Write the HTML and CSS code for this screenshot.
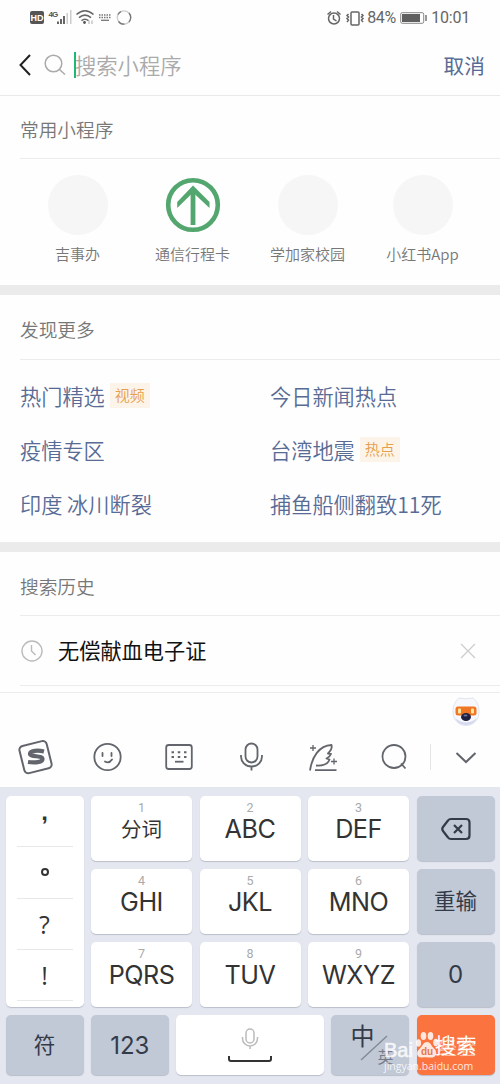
FILE: index.html
```html
<!DOCTYPE html>
<html lang="zh-CN">
<head>
<meta charset="utf-8">
<title>搜索小程序</title>
<link rel="stylesheet" href="styles.css">
</head>
<body>
<div class="phone">
  <div class="status">
    <svg class="status-left" width="106" height="22" viewBox="0 0 106 22">
      <rect x="0" y="4" width="14" height="13" rx="2" fill="#555"/>
      <text x="7" y="14" class="hd" text-anchor="middle">HD</text>
      <text x="18.500" y="9.500" class="net">4G</text>
      <g fill="#666"><rect x="27" y="14.500" width="2" height="2.500"/><rect x="30" y="12" width="2" height="5"/><rect x="33" y="9" width="2" height="8"/></g>
      <g fill="#ccc"><rect x="36.500" y="6" width="1.500" height="11"/><rect x="40" y="3" width="1.500" height="14"/></g>
      <g fill="none" stroke="#666" stroke-width="1.600"><path d="M46.500 7.500q8.500-7.500 17 0M49 10.700q6-5 12 0M51.500 13.600q3.500-2.800 7 0"/></g>
      <circle cx="54.500" cy="15.500" r="1.400" fill="#555"/><path d="M59 13.500v3.500M62 13.500v3.500" stroke="#aaa"/>
      <g stroke="#777" stroke-width="1.300"><path d="M69 8h12M69 10.500h12" stroke-dasharray="1.500 1"/><path d="M71 13.300h8"/></g>
      <g fill="none" stroke-width="1.300"><circle cx="94" cy="10.500" r="6.700" stroke="#ccc"/><path d="M99 6a6.700 6.700 0 0 1 0 9M88.500 14.300a6.700 6.700 0 0 0 6 2.900M88 7.500a6.700 6.700 0 0 1 3-3" stroke="#777"/></g>
    </svg>
    <div class="status-right">
      <svg width="40" height="20" viewBox="0 0 40 20" fill="none" stroke="#666" stroke-width="1.500">
        <circle cx="8" cy="10.500" r="5.500"/><path d="M7.500 7v4l3 2M1.500 6.500l3.500-3M14.500 6.500L11 3.500"/>
        <rect x="25" y="4" width="8" height="13" rx="1"/><path d="M22.500 6l-1.500 1.500 1.500 1.500-1.500 1.500 1.500 1.500-1.500 2M35.500 6l1.500 1.500-1.500 1.500 1.500 1.500-1.500 1.500 1.500 2"/>
      </svg>
      <span class="percent">84%</span>
      <svg width="28" height="14" viewBox="0 0 28 14"><rect x=".7" y="1.700" width="23" height="10.600" rx="1.500" fill="none" stroke="#888"/><rect x="2" y="3" width="18" height="8" fill="#606060"/><path d="M26 4v6" stroke="#777" stroke-width="1.500"/></svg>
      <span class="time">10:01</span>
    </div>
  </div>

  <header class="search-head">
    <svg class="back" width="12" height="22" viewBox="0 0 12 22"><path d="M11 1L1.500 11 11 21" fill="none" stroke="#222" stroke-width="2"/></svg>
    <svg class="lens" width="22" height="22" viewBox="0 0 22 22" fill="none" stroke="#aaa" stroke-width="1.500"><circle cx="9.500" cy="9.500" r="8.300"/><path d="M15.500 15.500l5.500 5"/></svg>
    <span class="caret"></span>
    <span class="placeholder">搜索小程序</span>
    <span class="cancel">取消</span>
  </header>

  <section class="recent">
    <h2 class="title">常用小程序</h2>
    <div class="apps">
      <div class="app"><span class="disc"></span><span>吉事办</span></div>
      <div class="app"><svg width="60" height="60" viewBox="0 0 60 60" fill="none" stroke="#53a66e"><circle cx="30" cy="30" r="24.800" stroke-width="4.600"/><path d="M30 50V15" stroke-width="4.800"/><path d="M14.200 33V27L30 10.500 46.500 27V33L30 17.500z" fill="#53a66e" stroke="none"/></svg><span>通信行程卡</span></div>
      <div class="app"><span class="disc"></span><span>学加家校园</span></div>
      <div class="app"><span class="disc"></span><span>小红书App</span></div>
    </div>
  </section>

  <section class="discover">
    <h2 class="title">发现更多</h2>
    <div class="links">
      <div class="link">热门精选<span class="tag">视频</span></div><div class="link">今日新闻热点</div>
      <div class="link">疫情专区</div><div class="link">台湾地震<span class="tag">热点</span></div>
      <div class="link">印度 冰川断裂</div><div class="link">捕鱼船侧翻致11死</div>
    </div>
  </section>

  <section class="history">
    <h2 class="title">搜索历史</h2>
    <div class="entry">
      <svg width="22" height="22" viewBox="0 0 22 22" fill="none" stroke="#bbb" stroke-width="1.400"><circle cx="11" cy="11" r="10"/><path d="M10.500 5v6l4 4"/></svg>
      <span class="entry-text">无偿献血电子证</span>
      <svg width="16" height="16" viewBox="0 0 16 16"><path d="M1 1l14 14M15 1L1 15" stroke="#ccc" stroke-width="1.200"/></svg>
    </div>
  </section>

  <div class="keyboard">
    <div class="mascot-row">
      <svg width="30" height="32" viewBox="0 0 30 32">
        <path d="M8 3q7 1.500 14 0C26 6 28 11 28 17c0 8-6 13.500-13 13.500S2 25 2 17C2 11 4 6 8 3z" fill="#f7f8fc" stroke="#e1e4f0"/>
        <path d="M4 23q11 9 22 0-3 7-11 7T4 23z" fill="#d3d8ee"/>
        <rect x="4.500" y="11.500" width="21" height="9" rx="2.500" fill="#ef7622"/><rect x="7" y="13.500" width="3" height="5" rx="1" fill="#ffe6a0"/><rect x="20" y="13.500" width="3" height="5" rx="1" fill="#ffe6a0"/>
        <ellipse cx="15" cy="22" rx="5" ry="4" fill="#1e2140"/><ellipse cx="14.500" cy="20.500" rx="2" ry="1" fill="#6d789e"/>
      </svg>
    </div>
    <div class="tools">
      <svg width="36" height="36" viewBox="0 0 36 36" fill="none" stroke="#62656b"><rect x="3.500" y="4" width="28" height="28" rx="4" stroke-width="2" transform="rotate(-14 18 18)"/><path d="M26 12.500C20 11 12.500 11.500 12 14.500c-.5 4 12.500 1.500 12.500 5.500 0 3.500-8 4-14.500 3" stroke-width="4.200"/></svg>
      <svg width="36" height="36" viewBox="0 0 36 36" fill="none" stroke="#62656b" stroke-width="1.800"><circle cx="17.500" cy="18" r="13.200"/><path d="M12.500 14v3M21.500 14v3M15 22.500q4 2.500 7-2" stroke-linecap="round"/></svg>
      <svg width="36" height="36" viewBox="0 0 36 36" fill="none" stroke="#62656b" stroke-width="1.800"><rect x="5.200" y="6" width="25.600" height="24" rx="2.500"/><path d="M10.500 13.200h15M10.500 18h15" stroke-dasharray="2.500 3.750" stroke-width="2"/><path d="M14 22.700h8.500"/></svg>
      <svg width="36" height="36" viewBox="0 0 36 36" fill="none" stroke="#62656b" stroke-width="1.800"><rect x="12.500" y="4.500" width="12" height="19" rx="6"/><path d="M8 16v1.500a10.500 10 0 0 0 21 0V16M18.500 27.500v4"/></svg>
      <svg width="36" height="36" viewBox="0 0 36 36" fill="none" stroke="#62656b" stroke-width="1.800" stroke-linejoin="round"><path d="M5 31.500C7 18 14 6.500 26.500 6c1 3-1 6-3.500 8.500l3 .5c-1 2.500-2.500 3.500-4.500 4.500l3 1c-1.500 4.500-5 6.500-13.500 6M10 31.200H31.500"/><path d="M8 6v6M5 9h6M29 19.500v6M26 22.500h6" stroke-width="1.300"/></svg>
      <svg width="36" height="36" viewBox="0 0 36 36" fill="none" stroke="#62656b" stroke-width="1.800"><circle cx="18" cy="17.500" r="11.500"/><path d="M25 24.500l4.500 5"/></svg>
      <span class="tool-rule"></span>
      <svg width="36" height="36" viewBox="0 0 36 36" fill="none" stroke="#62656b" stroke-width="2"><path d="M8.500 14L18 23l9.500-9"/></svg>
    </div>
    <div class="pad">
      <div class="main-keys">
        <div class="key punct"><span>,</span><span class="stop"><i></i></span><span>?</span><span>!</span></div>
        <div class="key"><small>1</small><b class="cn">分词</b></div>
        <div class="key"><small>2</small><b>ABC</b></div>
        <div class="key"><small>3</small><b>DEF</b></div>
        <div class="key gray"><svg width="32" height="24" viewBox="0 0 32 24" fill="none" stroke="#333b49" stroke-width="2.200" stroke-linejoin="round"><path d="M11 2h15q3.500 0 3.500 3.500v13Q29.500 22 26 22H11q-2 0-3-1.500L3 14q-1.500-2 0-4l5-6.500Q9 2 11 2z"/><path d="M14 8l8 8M22 8l-8 8"/></svg></div>
        <div class="key"><small>4</small><b>GHI</b></div>
        <div class="key"><small>5</small><b>JKL</b></div>
        <div class="key"><small>6</small><b>MNO</b></div>
        <div class="key gray reset">重输</div>
        <div class="key"><small>7</small><b>PQRS</b></div>
        <div class="key"><small>8</small><b>TUV</b></div>
        <div class="key"><small>9</small><b>WXYZ</b></div>
        <div class="key gray zero">0</div>
      </div>
      <div class="bottom-keys">
        <div class="key gray sym">符</div>
        <div class="key gray digits">123</div>
        <div class="key space"><svg width="48" height="38" viewBox="0 0 48 38" fill="none"><g stroke="#bbb" stroke-width="1.500"><rect x="20" y="2" width="8" height="14" rx="4"/><path d="M16.500 10v1.500a7.500 7.500 0 0 0 15 0V10M24 19v3"/></g><path d="M3 29v3q0 2 2 2h38q2 0 2-2v-3" stroke="#333" stroke-width="2"/></svg></div>
        <div class="key gray lang"><span class="zh">中</span><svg class="slash" width="28" height="26" viewBox="0 0 28 26"><path d="M1 25L27 1" stroke="#7f8795" stroke-width="1.300"/></svg><span class="en">英</span></div>
        <div class="key go">搜索</div>
      </div>
    </div>
  </div>

  <div class="watermark">
    <div class="brand"><span>Bai</span><svg width="24" height="28" viewBox="0 0 24 28"><g fill="#fff"><ellipse cx="3.500" cy="12" rx="2.600" ry="3.700"/><ellipse cx="8.500" cy="5" rx="2.800" ry="4"/><ellipse cx="15.500" cy="5" rx="2.800" ry="4"/><ellipse cx="20.800" cy="11.500" rx="2.600" ry="3.700"/><path d="M12 11c4 0 4 4 7.500 7 3 3 2 8.500-2.500 8.500-3 0-7-.8-10 0C2 27 .5 21.500 4 18.500 7.500 15.500 8 11 12 11z"/></g><text x="12" y="24" class="du" text-anchor="middle">du</text></svg><span class="jy">经验</span></div>
    <div class="site">jingyan.baidu.com</div>
  </div>
</div>
</body>
</html>
```
FILE: styles.css
```css
* { box-sizing: border-box; }
body { margin: 0; background: #fefefe; font-family: Roboto, "Noto Sans CJK SC", sans-serif; }
svg { display: block; flex: none; }
.phone { position: relative; width: 500px; height: 1084px; overflow: hidden; display: flex; flex-direction: column; }

.status { height: 35px; display: flex; justify-content: space-between; padding: 7px 30px 0 30px; }
.hd { font: bold 9px "Liberation Sans", sans-serif; fill: #fff; }
.net { font: bold 8px "Liberation Sans", sans-serif; fill: #555; letter-spacing: -1px; }
.status-right { display: flex; align-items: center; height: 21px; color: #666; font-size: 16px; }
.status-right svg + .percent + svg { margin-left: 2px; }
.percent { width: 31px; margin-left: 1px; letter-spacing: -.3px; }
.time { margin-left: 3px; letter-spacing: -.2px; }

.search-head { height: 61px; display: flex; align-items: center; padding: 0 15px 0 19px; border-bottom: 1px solid #e9e9e9; }
.lens { margin-left: 13px; }
.caret { width: 2px; height: 26px; margin-left: 8px; background: #1fb877; }
.placeholder { margin-left: -1px; padding-bottom: 2px; font-size: 21.300px; font-weight: 350; color: #aaa; }
.cancel { margin-left: auto; font-size: 20.700px; color: #576b95; }

.title { margin: 0 0 0 20px; font-size: 18.700px; line-height: 27px; font-weight: 350; color: #777; border-bottom: 1px solid #ececec; }
.recent { height: 189px; }
.recent .title { height: 63px; padding-top: 22px; }
.apps { display: grid; grid-template-columns: repeat(4, 115px); padding: 16px 0 0 20px; }
.app { display: flex; flex-direction: column; align-items: center; font: 350 15px/22px "Noto Sans CJK SC", sans-serif; color: #777; gap: 8px; }
.disc { width: 60px; height: 60px; border-radius: 50%; background: #f6f6f6; }

.discover { height: 257px; border-top: 10px solid #ebebeb; }
.discover .title { height: 65px; padding-top: 23px; }
.links { display: grid; grid-template-columns: 250px 1fr; grid-auto-rows: 54px; padding: 8px 0 0 20px; }
.link { display: flex; align-items: center; font: 350 21.200px/31px "Noto Sans CJK SC", sans-serif; color: #576b95; white-space: pre; }
.tag { margin: 1px 0 0 5px; padding: 0 5px 1px; font-size: 15px; line-height: 24px; color: #e6a04b; background: #fdf4e9; }

.history { height: 150px; border-top: 10px solid #ebebeb; }
.history .title { height: 64px; padding-top: 23px; }
.entry { height: 70px; margin-left: 20px; padding: 0 24px 0 1px; display: flex; align-items: center; border-bottom: 1px solid #ececec; }
.entry-text { flex: 1; margin-left: 15px; padding-bottom: 2px; font-size: 21.200px; color: #111; }

.keyboard { height: 392px; border-top: 1px solid #ececec; }
.mascot-row { height: 37px; padding: 2px 19px 0; display: flex; justify-content: flex-end; }
.tools { height: 57px; display: flex; align-items: center; padding: 0 0 4px 18px; gap: 35.700px; }
.tool-rule { flex: none; width: 1px; height: 26px; background: #e5e5e5; margin: 0 -18.200px; }
.pad { height: 298px; padding: 9px 5.500px; background: #e4e7f0; }
.main-keys { display: grid; grid-template-columns: 78px 101px 101px 101px 78px; grid-template-rows: repeat(3, 65px); gap: 8px 7.500px; }
.bottom-keys { display: grid; grid-template-columns: 78px 78px 148px 78px 78px; gap: 7.300px; margin-top: 8px; height: 60px; }
.key { position: relative; display: flex; flex-direction: column; align-items: center; background: #fff; border-radius: 5px; box-shadow: 0 1px 1px #b9bec9; color: #333; font-family: "Open Sans", "Noto Sans CJK SC", sans-serif; }
.key small { margin-top: 5px; font: 12.500px/14px Roboto, sans-serif; color: #aaa; }
.key b { font: 400 25.200px/28px Inter, sans-serif; letter-spacing: -.5px; }
.key .cn { font: 400 20.500px/26px "Noto Sans CJK SC", sans-serif; letter-spacing: 0; }
.gray { background: #c1c8d6; justify-content: center; color: #333b49; }
.punct { grid-row: span 3; padding: 0 11px; }
.punct span { width: 100%; height: 51.300px; display: flex; align-items: center; justify-content: center; border-bottom: 1px solid #e8e8e8; font: 25px/30px "Open Sans", sans-serif; }
.punct span:first-child { padding-bottom: 18px; font: 700 24px/30px "Liberation Sans", sans-serif; }
.stop i { width: 8px; height: 8px; border: 2px solid #333; border-radius: 50%; }
.reset, .sym { font-size: 21.500px; line-height: 30px; padding-bottom: 1px; }
.digits, .zero { font: 400 24px Inter, sans-serif; }
.space { justify-content: flex-end; padding-bottom: 10px; }
.lang .zh { position: absolute; left: 19px; top: 4px; font-size: 24px; line-height: 34px; }
.lang .slash { position: absolute; left: 29px; top: 20px; }
.lang .en { position: absolute; left: 46px; top: 31px; font-size: 16px; line-height: 22px; color: #747c8a; }
.go { background: #fb733e; color: #fff; font-size: 21px; line-height: 30px; padding-bottom: 1px; justify-content: center; }

.watermark { position: absolute; left: 384px; top: 1030px; width: 94px; color: #fff; opacity: .83; }
.brand { display: flex; align-items: center; height: 30px; font: 20px/24px "Liberation Sans", sans-serif; white-space: nowrap; }
.brand span { padding-top: 9px; -webkit-text-stroke: .6px #fff; }
.brand svg { margin-left: 2px; }
.brand .jy { font: 19px/24px "Noto Sans CJK SC", sans-serif; margin-left: -1px; padding-top: 3px; opacity: .6; -webkit-text-stroke: 0; }
.du { font: bold 10px "Liberation Sans", sans-serif; fill: #de7953; }
.site { font: 10.500px/12px "Open Sans", sans-serif; white-space: nowrap; }
```
